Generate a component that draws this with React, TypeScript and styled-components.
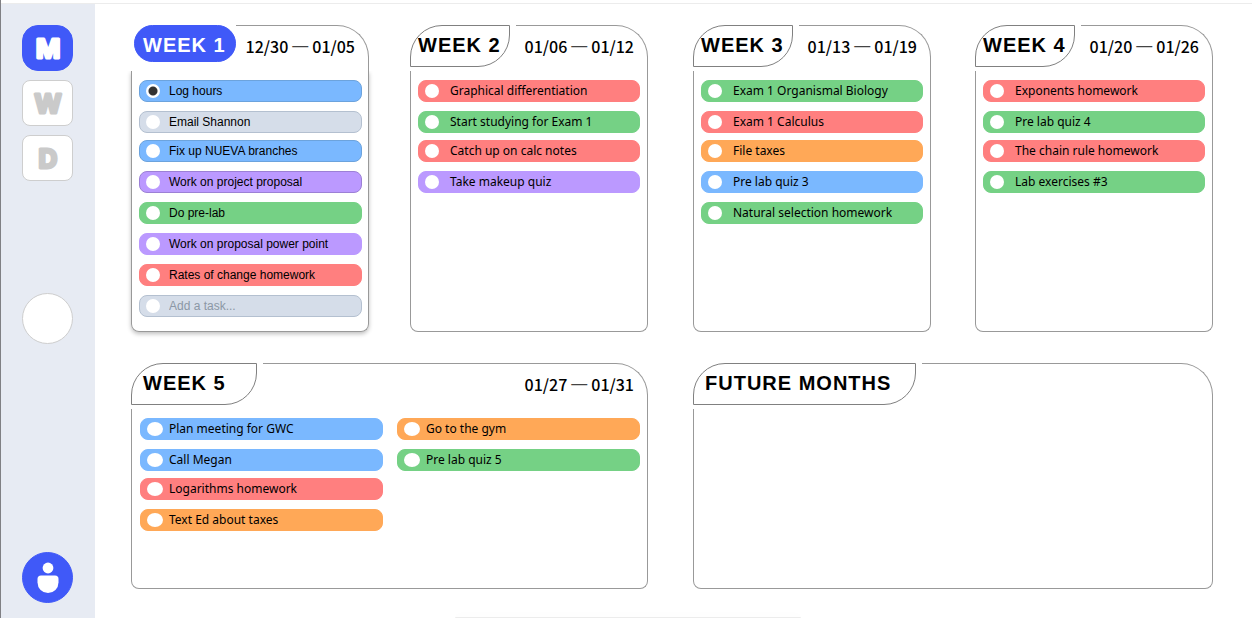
import React from "react";
import styled, { createGlobalStyle, css } from "styled-components";

const GlobalStyle = createGlobalStyle`
  * { box-sizing: border-box; }
  body { margin: 0; background: #fff; color: #000; font-family: "Liberation Sans", Arial, sans-serif; }
  ul { list-style: none; margin: 0; padding: 0; }
  h2, p { margin: 0; }
  button { padding: 0; font: inherit; cursor: pointer; }
`;

const palette = {
  blue: "#7ab8ff",
  gray: "#d5dde9",
  purple: "#bb99ff",
  green: "#75d185",
  red: "#ff7f7f",
  orange: "#ffa857",
};

const edges = {
  blue: "#6ca3dd",
  gray: "#b4c0d0",
  purple: "#9c80d6",
  green: "#75d185",
  red: "#ff7f7f",
  orange: "#ffa857",
};

type Tone = keyof typeof palette;
type Variant = "active" | "plain" | "wide";
type Task = { text: string; tone: Tone; done?: boolean; edged?: boolean };

const bodyPadding = {
  active: "9px 6px 13px 7px",
  plain: "9px 7px 13px 7px",
  wide: "9px 7px 13px 8px",
};

const rowGap = { active: 9, plain: 11, wide: 6 };

const Page = styled.div`
  display: flex;
  flex-direction: column;
  min-height: 100vh;
  border-left: 1px solid #808084;
`;

const TopStrip = styled.div`
  height: 4px;
  border-bottom: 1px solid #ececec;
`;

const Shell = styled.div`
  display: flex;
  flex: 1;
`;

const Sidebar = styled.aside`
  display: flex;
  flex-direction: column;
  align-items: center;
  flex: none;
  width: 94px;
  padding: 21px 1px 15px 0;
  background: #e7ebf3;
`;

const Nav = styled.nav`
  display: flex;
  flex-direction: column;
  gap: 9px;
`;

const NavButton = styled.button<{ $active?: boolean }>`
  display: grid;
  place-items: center;
  width: 51px;
  height: 46px;
  border: 1px solid ${(p) => (p.$active ? "#4059f8" : "#cecece")};
  border-radius: ${(p) => (p.$active ? 16 : 8)}px;
  background: ${(p) => (p.$active ? "#4059f8" : "#fff")};
  color: ${(p) => (p.$active ? "#fff" : "#cacaca")};
`;

const NavLetter = styled.svg`
  display: block;
  text {
    font: 700 26px Inter, sans-serif;
    fill: currentColor;
    stroke: currentColor;
    stroke-width: 3px;
    stroke-linejoin: round;
    text-anchor: middle;
  }
`;

const RoundButton = styled.button<{ $filled?: boolean }>`
  display: grid;
  place-items: center;
  width: 51px;
  height: 51px;
  margin-top: ${(p) => (p.$filled ? "auto" : "112px")};
  border: 1px solid ${(p) => (p.$filled ? "#4059f8" : "#cecece")};
  border-radius: 50%;
  background: ${(p) => (p.$filled ? "#4059f8" : "#fff")};
`;

const Main = styled.main`
  flex: 1;
  display: grid;
  grid-template-columns: 517fr 520fr;
  gap: 45px;
  padding: 21px 39px 29px 36px;
`;

const Half = styled.div<{ $gap: number }>`
  display: grid;
  grid-template-columns: 1fr 1fr;
  grid-template-rows: minmax(307px, 307fr) minmax(226px, 226fr);
  gap: 31px ${(p) => p.$gap}px;
`;

const Card = styled.section<{ $wide?: boolean }>`
  display: flex;
  flex-direction: column;
  min-width: 0;
  ${(p) => p.$wide && "grid-column: 1 / -1;"}
`;

const CardHeader = styled.header<{ $variant: Variant }>`
  display: flex;
  align-items: flex-start;
  height: 46px;
  gap: ${(p) => (p.$variant === "active" ? 0 : 6)}px;
`;

const Tab = styled.h2<{ $variant: Variant }>`
  flex: none;
  height: 42px;
  padding: 0 8px 0 7px;
  border: 1px solid #808080;
  border-radius: 32px 0 32px 0;
  font-size: 20px;
  font-weight: 700;
  line-height: 38px;
  letter-spacing: 1px;
  white-space: nowrap;
  ${(p) =>
    p.$variant === "wide" &&
    css`
      min-width: 126px;
      padding: 0 24px 0 11px;
    `}
  ${(p) =>
    p.$variant === "active" &&
    css`
      height: 37px;
      margin-left: 3px;
      padding: 0 9px 0 8px;
      border-color: #4059f8;
      border-radius: 19px;
      background: #4059f8;
      color: #fff;
    `}
`;

const Dates = styled.p`
  display: flex;
  flex: 1;
  justify-content: flex-end;
  gap: 4px;
  height: 46px;
  padding-right: 13px;
  border: solid #999;
  border-width: 1px 1px 0 0;
  border-top-right-radius: 32px;
  font: 500 16px/40px "Noto Sans CJK JP", "Noto Sans", sans-serif;
  white-space: nowrap;
`;

const Dash = styled.span`
  color: #444;
  font-family: "Liberation Sans", Arial, sans-serif;
  font-weight: 400;
`;

const CardBody = styled.div<{ $variant: Variant }>`
  flex: 1;
  padding: ${(p) => bodyPadding[p.$variant]};
  border: solid #999;
  border-width: 0 1px 1px 1px;
  border-radius: 0 0 8px 8px;
  ${(p) =>
    p.$variant === "active" &&
    css`
      box-shadow: 0 2px 4px rgba(0, 0, 0, 0.25);
      clip-path: inset(0 -8px -8px -8px);
    `}
`;

const Columns = styled.div`
  display: grid;
  grid-template-columns: 1fr 1fr;
  gap: 14px;
`;

const Row = styled.li<{ $tone: Tone; $edged?: boolean; $variant: Variant }>`
  display: flex;
  align-items: center;
  gap: ${(p) => rowGap[p.$variant]}px;
  height: 22px;
  padding: 0 6px;
  border: 1px solid ${(p) => (p.$edged ? edges : palette)[p.$tone]};
  border-radius: 8px;
  background: ${(p) => palette[p.$tone]};
  font: ${(p) =>
    p.$variant === "active"
      ? '12px/20px "Liberation Sans", Arial, sans-serif'
      : '12px/20px "Noto Sans", sans-serif'};
  &:nth-child(n + 2) { margin-top: 9px; }
  &:nth-child(3) { margin-top: 7px; }
`;

const Tick = styled.input<{ $wide?: boolean }>`
  appearance: none;
  flex: none;
  width: ${(p) => (p.$wide ? 16 : 14)}px;
  height: 14px;
  margin: 0;
  border-radius: 50%;
  background: #fff;
  &:checked { background: radial-gradient(circle, #333 4px, #fff 5px); }
`;

const TaskLabel = styled.label`
  white-space: nowrap;
`;

const TaskInput = styled.input`
  flex: 1;
  min-width: 0;
  padding: 0;
  border: 0;
  background: none;
  font: inherit;
  outline: none;
  &::placeholder { color: #8b97a5; opacity: 1; }
`;

const BottomHandle = styled.div`
  position: fixed;
  bottom: 0;
  left: 50%;
  width: 346px;
  height: 1px;
  margin-left: -171px;
  border-radius: 8px 8px 0 0;
  background: #ececec;
  box-shadow: 0 0 8px rgba(0, 0, 0, 0.08);
`;

function TaskRow({ task, variant, id }: { task: Task; variant: Variant; id: string }) {
  return (
    <Row $tone={task.tone} $edged={task.edged} $variant={variant}>
      <Tick type="checkbox" id={id} defaultChecked={task.done} $wide={variant === "wide"} />
      <TaskLabel htmlFor={id}>{task.text}</TaskLabel>
    </Row>
  );
}

type WeekProps = {
  title: string;
  from?: string;
  to?: string;
  variant?: Variant;
  columns: Task[][];
};

function Week({ title, from, to, variant = "plain", columns }: WeekProps) {
  const lists = columns.map((tasks, c) => (
    <ul key={c}>
      {tasks.map((task, i) => (
        <TaskRow key={task.text} task={task} variant={variant} id={`${title}-${c}-${i}`.replace(/ /g, "-")} />
      ))}
      {variant === "active" && (
        <Row $tone="gray" $edged $variant={variant}>
          <Tick type="checkbox" aria-label="New task done" />
          <TaskInput type="text" placeholder="Add a task..." aria-label="Add a task" />
        </Row>
      )}
    </ul>
  ));
  return (
    <Card $wide={variant === "wide"}>
      <CardHeader $variant={variant}>
        <Tab $variant={variant}>{title}</Tab>
        <Dates>
          {from && (
            <>
              <span>{from}</span>
              <Dash>—</Dash>
              <span>{to}</span>
            </>
          )}
        </Dates>
      </CardHeader>
      <CardBody $variant={variant}>
        {variant === "wide" ? <Columns>{lists}</Columns> : lists}
      </CardBody>
    </Card>
  );
}

const week1: Task[] = [
  { text: "Log hours", tone: "blue", done: true, edged: true },
  { text: "Email Shannon", tone: "gray", edged: true },
  { text: "Fix up NUEVA branches", tone: "blue", edged: true },
  { text: "Work on project proposal", tone: "purple", edged: true },
  { text: "Do pre-lab", tone: "green" },
  { text: "Work on proposal power point", tone: "purple" },
  { text: "Rates of change homework", tone: "red" },
];
const week2: Task[] = [
  { text: "Graphical differentiation", tone: "red" },
  { text: "Start studying for Exam 1", tone: "green" },
  { text: "Catch up on calc notes", tone: "red" },
  { text: "Take makeup quiz", tone: "purple" },
];
const week3: Task[] = [
  { text: "Exam 1 Organismal Biology", tone: "green" },
  { text: "Exam 1 Calculus", tone: "red" },
  { text: "File taxes", tone: "orange" },
  { text: "Pre lab quiz 3", tone: "blue" },
  { text: "Natural selection homework", tone: "green" },
];
const week4: Task[] = [
  { text: "Exponents homework", tone: "red" },
  { text: "Pre lab quiz 4", tone: "green" },
  { text: "The chain rule homework", tone: "red" },
  { text: "Lab exercises #3", tone: "green" },
];
const week5: Task[][] = [
  [
    { text: "Plan meeting for GWC", tone: "blue" },
    { text: "Call Megan", tone: "blue" },
    { text: "Logarithms homework", tone: "red" },
    { text: "Text Ed about taxes", tone: "orange" },
  ],
  [
    { text: "Go to the gym", tone: "orange" },
    { text: "Pre lab quiz 5", tone: "green" },
  ],
];

const views = [
  { letter: "M", name: "Month" },
  { letter: "W", name: "Week" },
  { letter: "D", name: "Day" },
];

export default function App() {
  return (
    <Page>
      <GlobalStyle />
      <TopStrip />
      <Shell>
        <Sidebar>
          <Nav>
            {views.map((view, i) => (
              <NavButton key={view.letter} type="button" $active={i === 0} aria-label={view.name}>
                <NavLetter width="40" height="30" viewBox="0 0 40 30">
                  <text x="20" y="25">{view.letter}</text>
                </NavLetter>
              </NavButton>
            ))}
          </Nav>
          <RoundButton type="button" aria-label="Theme" />
          <RoundButton type="button" $filled aria-label="Account">
            <svg width="22" height="32" viewBox="0 0 22 32">
              <circle cx="11" cy="6" r="5.4" fill="#fff" />
              <path d="M4 13.5H18Q21.500 13.500 21.500 17V20.500A10.500 10.500 0 0 1 .5 20.500V17Q.5 13.500 4 13.500Z" fill="#fff" />
            </svg>
          </RoundButton>
        </Sidebar>
        <Main>
          <Half $gap={41}>
            <Week title="WEEK 1" from="12/30" to="01/05" variant="active" columns={[week1]} />
            <Week title="WEEK 2" from="01/06" to="01/12" columns={[week2]} />
            <Week title="WEEK 5" from="01/27" to="01/31" variant="wide" columns={week5} />
          </Half>
          <Half $gap={44}>
            <Week title="WEEK 3" from="01/13" to="01/19" columns={[week3]} />
            <Week title="WEEK 4" from="01/20" to="01/26" columns={[week4]} />
            <Week title="FUTURE MONTHS" variant="wide" columns={[]} />
          </Half>
        </Main>
      </Shell>
      <BottomHandle />
    </Page>
  );
}
